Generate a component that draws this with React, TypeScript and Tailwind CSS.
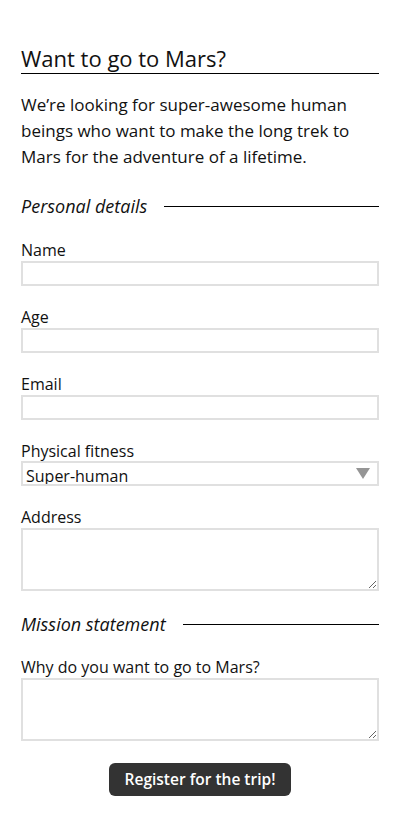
import { useState } from "react";

const font = { fontFamily: '"Open Sans", "Liberation Sans", sans-serif' };

function Field({ label, children }: { label: string; children: React.ReactNode }) {
  return (
    <label className="flex flex-col">
      <span className="text-[16px] leading-[22px]">{label}</span>
      {children}
    </label>
  );
}

function Legend({ title }: { title: string }) {
  return (
    <div className="flex items-center gap-[17px]">
      <span className="text-[18px] leading-[24px] italic">{title}</span>
      <span className="flex-1 border-t border-black" />
    </div>
  );
}

export default function App() {
  const [fitness, setFitness] = useState("Super-human");

  return (
    <div className="min-h-[839px] bg-white px-[21px] pt-[43px] text-[#111]" style={font}>
      <h1 className="border-b border-black text-[22px] leading-[30px] font-normal">Want to go to Mars?</h1>
      <p className="mt-[18px] text-[17px] leading-[26px]">
        We’re looking for super-awesome human beings who want to make the long trek to Mars for the adventure of a
        lifetime.
      </p>

      <form className="mt-[24px] flex flex-col" onSubmit={(e) => e.preventDefault()}>
        <Legend title="Personal details" />

        <div className="mt-[21px] flex flex-col gap-[20px]">
          <Field label="Name">
            <input className="h-[25px] border-2 border-[#e0e0e0] px-1 outline-none" />
          </Field>
          <Field label="Age">
            <input className="h-[25px] border-2 border-[#e0e0e0] px-1 outline-none" />
          </Field>
          <Field label="Email">
            <input className="h-[25px] border-2 border-[#e0e0e0] px-1 outline-none" />
          </Field>
          <Field label="Physical fitness">
            <div className="relative -mt-[1px]">
              <select
                value={fitness}
                onChange={(e) => setFitness(e.target.value)}
                className="block h-[25px] w-full appearance-none border-2 border-[#e0e0e0] bg-white pl-[3px] pt-[3px] text-[16px] leading-[20px] outline-none"
              >
                <option>Super-human</option>
                <option>Athletic</option>
                <option>Average</option>
              </select>
              {/* dropdown arrow */}
              <svg className="pointer-events-none absolute right-[9px] top-[7px]" width="14" height="11" viewBox="0 0 14 11">
                <path d="M0 0 H14 L7 11 Z" fill="#959595" />
              </svg>
            </div>
          </Field>
          <Field label="Address">
            <textarea className="block h-[63px] border-2 border-[#e0e0e0] px-1 outline-none" />
          </Field>
        </div>

        <div className="mt-[21px]">
          <Legend title="Mission statement" />
        </div>

        <div className="mt-[20px]">
          <Field label="Why do you want to go to Mars?">
            <textarea className="block h-[63px] border-2 border-[#e0e0e0] px-1 outline-none" />
          </Field>
        </div>

        <div className="mt-[22px] flex justify-center">
          <button
            type="submit"
            className="h-[33px] rounded-[6px] bg-[#333] px-[16px] text-[15.5px] font-semibold text-white"
          >
            Register for the trip!
          </button>
        </div>
      </form>
    </div>
  );
}
